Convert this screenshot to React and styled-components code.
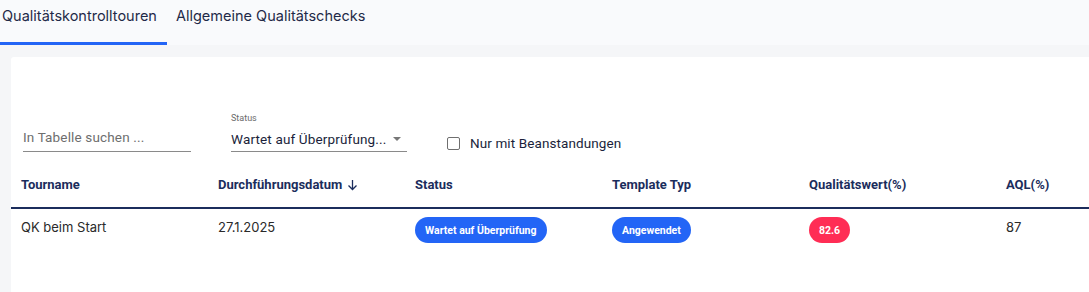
import React from 'react'
import styled, { createGlobalStyle } from 'styled-components'

const Global = createGlobalStyle`
  html, body { margin: 0; padding: 0; }
  body {
    background: #f5f6f8;
    font-family: Inter, "Noto Sans", sans-serif;
    overflow: hidden;
    width: 1089px;
    height: 292px;
  }
`

const Page = styled.div`
  display: flex;
  flex-direction: column;
  height: 292px;
`

const TabBar = styled.div`
  display: flex;
  height: 45px;
  background: #f9fafc;
`

const Tab = styled.div`
  height: 45px;
  box-sizing: border-box;
  padding: 7px 10px 0 ${p => (p.$active ? '2px' : '9px')};
  display: flex;
  align-items: flex-start;
  font-size: 14.5px;
  color: #1f2a48;
  border-bottom: 3px solid ${p => (p.$active ? '#2365f6' : 'transparent')};
  white-space: nowrap;
`

const Card = styled.div`
  margin: 12px 0 0 11px;
  flex: 1;
  background: #fff;
  border-radius: 3px 0 0 0;
  padding-top: 54px;
  overflow: hidden;
`

const Filters = styled.div`
  display: flex;
  align-items: flex-end;
  padding-left: 12px;
  height: 41px;
`

const Field = styled.div`
  width: ${p => p.$w}px;
  margin-right: 40px;
  border-bottom: 1px solid #8a8a8a;
  display: flex;
  flex-direction: column;
`

const FieldLabel = styled.div`
  font-family: Roboto, sans-serif;
  font-size: 9px;
  color: #6b6b6b;
  height: 12px;
  line-height: 12px;
  margin-bottom: 3px;
`

const FieldValue = styled.div`
  font-family: Roboto, sans-serif;
  font-size: 13.5px;
  color: ${p => (p.$placeholder ? '#6e6e6e' : '#1b1f3b')};
  height: 24px;
  box-sizing: border-box;
  padding-top: ${p => (p.$placeholder ? 1 : 3)}px;
  line-height: 18px;
  display: flex;
  justify-content: space-between;
  letter-spacing: 0.15px;
`

const Caret = styled.span`
  width: 0;
  height: 0;
  border-left: 4px solid transparent;
  border-right: 4px solid transparent;
  border-top: 4px solid #777;
  margin: 7px 6px 0 0;
`

const CheckRow = styled.label`
  display: flex;
  align-items: center;
  gap: 10px;
  font-family: Roboto, sans-serif;
  font-size: 13.5px;
  color: #1b1f3b;
  height: 18px;
  letter-spacing: 0.1px;
`

const Box = styled.span`
  width: 11px;
  height: 11px;
  border: 1.5px solid #6f6f6f;
  border-radius: 2px;
`

const Table = styled.div`
  margin-top: 16px;
  width: 1182px;
`

const Row = styled.div`
  display: grid;
  grid-template-columns: repeat(6, 197px);
  height: ${p => p.$h}px;
  border-bottom: ${p => (p.$head ? '2px solid #1b2d5c' : 'none')};
  box-sizing: border-box;
`

const HeadCell = styled.div`
  padding: 9px 10px 0;
  font-family: Roboto, sans-serif;
  font-weight: 700;
  font-size: 13px;
  line-height: 15px;
  color: #1b2d5c;
  display: flex;
  gap: 5px;
`

const Cell = styled.div`
  padding: 10px 10px 0;
  font-size: 13px;
  line-height: 16px;
  color: #2a2a2a;
`

const BadgeCell = styled.div`
  padding: 8px 10px 0;
  display: flex;
  align-items: flex-start;
`

const Badge = styled.span`
  display: inline-flex;
  align-items: center;
  height: 26px;
  padding: 0 10px;
  border-radius: 13px;
  background: ${p => p.$bg};
  color: #fff;
  font-family: Roboto, sans-serif;
  font-weight: 700;
  font-size: 10.5px;
`

const Arrow = () => (
  <svg width="11" height="12" viewBox="0 0 11 12" style={{ marginTop: 2 }}>
    <path d="M5.5 1v9.5M1.5 6.5l4 4 4-4" stroke="#1b2d5c" strokeWidth="1.3" fill="none" />
  </svg>
)

export default function App() {
  return (
    <Page>
      <Global />
      <TabBar>
        <Tab $active>Qualitätskontrolltouren</Tab>
        <Tab>Allgemeine Qualitätschecks</Tab>
      </TabBar>
      <Card>
        <Filters>
          <Field $w={168}>
            <FieldValue $placeholder>In Tabelle suchen ...</FieldValue>
          </Field>
          <Field $w={176}>
            <FieldLabel>Status</FieldLabel>
            <FieldValue>
              Wartet auf Überprüfung...
              <Caret />
            </FieldValue>
          </Field>
          <CheckRow>
            <Box />
            Nur mit Beanstandungen
          </CheckRow>
        </Filters>
        <Table>
          <Row $head $h={41}>
            <HeadCell>Tourname</HeadCell>
            <HeadCell>
              Durchführungsdatum <Arrow />
            </HeadCell>
            <HeadCell>Status</HeadCell>
            <HeadCell>Template Typ</HeadCell>
            <HeadCell>Qualitätswert(%)</HeadCell>
            <HeadCell>AQL(%)</HeadCell>
          </Row>
          <Row $h={50}>
            <Cell>QK beim Start</Cell>
            <Cell>27.1.2025</Cell>
            <BadgeCell>
              <Badge $bg="#2365f6">Wartet auf Überprüfung</Badge>
            </BadgeCell>
            <BadgeCell>
              <Badge $bg="#2365f6">Angewendet</Badge>
            </BadgeCell>
            <BadgeCell>
              <Badge $bg="#ff2d55">82.6</Badge>
            </BadgeCell>
            <Cell>87</Cell>
          </Row>
        </Table>
      </Card>
    </Page>
  )
}
